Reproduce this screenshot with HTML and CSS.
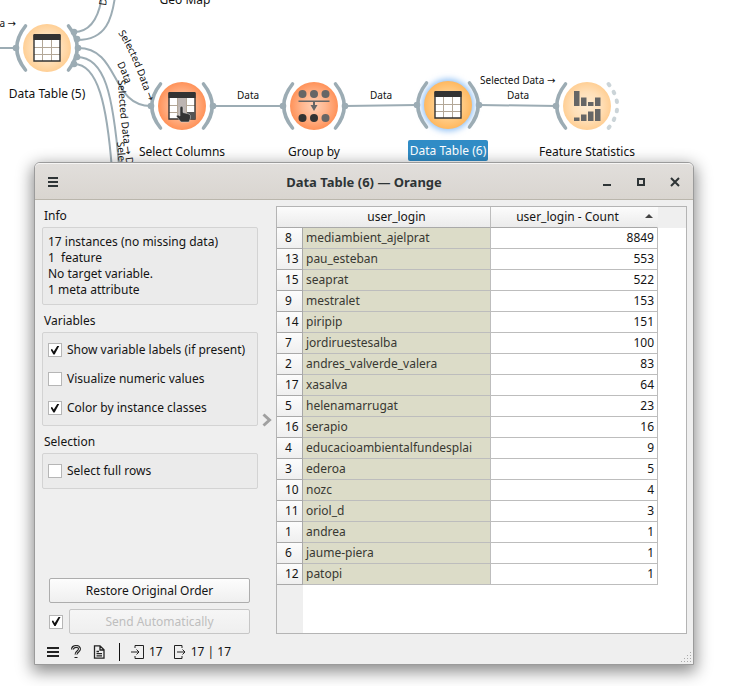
FILE: index.html
```html
<!DOCTYPE html>
<html lang="en">
<head>
<meta charset="utf-8">
<title>Data Table (6) — Orange</title>
<link rel="stylesheet" href="styles.css">
</head>
<body>
<main class="desktop">
  <svg class="canvas" width="738" height="200" viewBox="0 0 738 200" role="img" aria-label="Workflow canvas">
    <defs>
      <radialGradient id="pale"><stop offset="0" stop-color="#ffecd2"/><stop offset=".6" stop-color="#ffdfb7"/><stop offset="1" stop-color="#ffcf95"/></radialGradient>
      <radialGradient id="red"><stop offset="0" stop-color="#ffd0b5"/><stop offset=".5" stop-color="#ffb68e"/><stop offset="1" stop-color="#ff9259"/></radialGradient>
      <radialGradient id="amber"><stop offset="0" stop-color="#ffe1b5"/><stop offset=".6" stop-color="#ffcb85"/><stop offset="1" stop-color="#ffb85f"/></radialGradient>
      <filter id="glow" x="-40%" y="-40%" width="180%" height="180%"><feGaussianBlur stdDeviation="3"/></filter>
      <g id="table">
        <rect x="-13" y="-13" width="26" height="26" fill="#fff"/>
        <path d="M-4.500-8V13M4.500-8V13M-13-.500H13M-13 6.500H13" stroke="#b3a797" fill="none"/>
        <path d="M-13.500-14H13.500V-8H-13.500Z" fill="#333"/>
        <path d="M-13-13V13H13V-13" fill="none" stroke="#333" stroke-width="1.400"/>
      </g>
      <g id="left-anchor"><path d="M-21.500-22Q-39 0-21.500 22" fill="none" stroke="#9cacb4" stroke-width="3.600" stroke-linecap="round"/></g>
      <g id="right-anchor"><path d="M21.500-22Q39 0 21.500 22" fill="none" stroke="#9cacb4" stroke-width="3.600" stroke-linecap="round"/></g>
      <path id="curve-a" d="M118 33C130 50 138 74 150 106"/>
      <path id="curve-b" d="M117 64Q123 75 129 94"/>
      <path id="curve-c" d="M118 80C119 105 122 132 128 175"/>
    </defs>

    <g class="links">
      <path d="M0 48H16M212 106H283M345 106L417 105M479 105L557 106"/>
      <path d="M74 32C94 32 101 10 103-12M77 40C106 40 113 20 116-12"/>
      <path d="M78 48C120 48 110 106 151 106M77 57C105 57 113 95 119 165M74 64C98 64 107 105 112 170"/>
    </g>
    <g class="dots">
      <circle cx="16" cy="48" r="3.300"/><circle cx="74" cy="32" r="3.300"/><circle cx="77" cy="39" r="3.300"/><circle cx="78" cy="48" r="3.300"/><circle cx="77" cy="57" r="3.300"/><circle cx="74" cy="64" r="3.300"/>
      <circle cx="151" cy="106" r="3.300"/><circle cx="213" cy="106" r="3.300"/><circle cx="283" cy="106" r="3.300"/><circle cx="345" cy="106" r="3.300"/><circle cx="417" cy="105" r="3.300"/><circle cx="479" cy="105" r="3.300"/><circle cx="556" cy="106" r="3.300"/>
    </g>

    <g transform="translate(47 48)"><circle r="24" fill="url(#pale)"/><use href="#left-anchor"/><use href="#right-anchor"/><use href="#table"/></g>

    <g transform="translate(182 106)">
      <circle r="24" fill="url(#red)"/><use href="#left-anchor"/><use href="#right-anchor"/><use href="#table"/>
      <path d="M-4-8H4V13H-4Z" fill="#bdb5b2"/><path d="M5 6H13V13H5Z" fill="#555"/>
      <path d="M-2 1Q-.500-.500 1 1V6.500L7 8Q9 9 8.500 12L7 16H-1L-5.500 10.500Q-5 8-2 10Z" fill="#333" stroke="#ddd" stroke-width=".5"/>
    </g>

    <g transform="translate(314 106)">
      <circle r="24" fill="url(#red)"/><use href="#left-anchor"/><use href="#right-anchor"/>
      <g fill="#666"><circle cx="-11.500" cy="-12" r="4"/><circle cy="-12" r="4"/><circle cx="11.500" cy="-12" r="4"/><circle cx="11.500" cy="12" r="4"/><path d="M-15.500-5.500H15.500V-4H-15.500ZM-1-4H1V-1H3.500L0 5-3.500-1H-1Z"/></g>
      <g fill="#333"><circle cx="-11.500" cy="12" r="4"/><circle cy="12" r="4"/></g>
    </g>

    <g transform="translate(448 105)">
      <circle r="26" fill="#8fc0f5" filter="url(#glow)"/><circle r="24" fill="url(#amber)"/><use href="#left-anchor"/><use href="#right-anchor"/><use href="#table"/>
    </g>

    <g transform="translate(587 106)">
      <circle r="24" fill="url(#pale)"/><use href="#left-anchor"/>
      <path d="M21.500-22Q39 0 21.500 22" fill="none" stroke="#cbd4d8" stroke-width="4" stroke-linecap="round" stroke-dasharray="1.500 7.800"/>
      <path d="M-13-15H-7.500V0H-13ZM-6-8.500H-.500V0H-6ZM1-4H6.500V0H1ZM8-8.500H13.500V0H8ZM-13 11.500H-7.500V15H-13ZM-6 8.500H-.500V15H-6ZM1 5.500H6.500V15H1ZM8 3H13.500V15H8Z" fill="#666"/>
    </g>

    <rect x="408" y="140" width="80" height="21" rx="2" fill="#308cc6"/>
    <g class="node-text">
      <text x="185" y="4">Geo Map</text>
      <text x="47" y="98">Data Table (5)</text>
      <text x="182" y="156">Select Columns</text>
      <text x="314" y="156">Group by</text>
      <text class="selected" x="448" y="155">Data Table (6)</text>
      <text x="587" y="156">Feature Statistics</text>
    </g>
    <g class="link-text">
      <text x="16" y="27" text-anchor="end">Data <tspan class="arrow">→</tspan></text>
      <text x="237" y="99">Data</text>
      <text x="370" y="99">Data</text>
      <text x="480" y="84">Selected Data <tspan class="arrow">→</tspan></text>
      <text x="507" y="99">Data</text>
      <text transform="translate(106 6) rotate(-82)">Data</text>
      <text><textPath href="#curve-a">Selected Data <tspan class="arrow">→</tspan></textPath></text>
      <text><textPath href="#curve-b">Data</textPath></text>
      <text><textPath href="#curve-c">Selected Data <tspan class="arrow">→</tspan> Data</textPath></text>
      <text transform="translate(117 142) rotate(86)">Selected Data</text>
    </g>
  </svg>

  <section class="window" aria-label="Data Table (6)">
    <header class="titlebar">
      <button class="title-button" aria-label="Menu"><svg width="12" height="12" viewBox="0 0 12 12"><path d="M1 2H11M1 6H11M1 10H11"/></svg></button>
      <h1>Data Table (6) — Orange</h1>
      <div class="window-controls">
        <button class="title-button" aria-label="Minimize"><svg width="12" height="12" viewBox="0 0 12 12"><path d="M2 9H10"/></svg></button>
        <button class="title-button" aria-label="Maximize"><svg width="12" height="12" viewBox="0 0 12 12"><path d="M3 3H9V9H3Z"/></svg></button>
        <button class="title-button" aria-label="Close"><svg width="12" height="12" viewBox="0 0 12 12"><path d="M2 2L10 10M10 2L2 10"/></svg></button>
      </div>
    </header>

    <div class="content">
      <aside class="sidebar">
        <h2>Info</h2>
        <div class="group info"><p>17 instances (no missing data)</p><p>1&nbsp; feature</p><p>No target variable.</p><p>1 meta attribute</p></div>
        <h2>Variables</h2>
        <div class="group options">
          <label><input type="checkbox" checked>Show variable labels (if present)</label>
          <label><input type="checkbox">Visualize numeric values</label>
          <label><input type="checkbox" checked>Color by instance classes</label>
        </div>
        <h2>Selection</h2>
        <div class="group options"><label><input type="checkbox">Select full rows</label></div>
        <div class="actions">
          <button class="push">Restore Original Order</button>
          <div class="auto"><input type="checkbox" aria-label="Send automatically" checked><button class="push" disabled>Send Automatically</button></div>
        </div>
      </aside>
      <button class="splitter" aria-label="Collapse panel"><svg width="10" height="14" viewBox="0 0 10 14"><path d="M1.500 1.500L7.500 7 1.500 12.500"/></svg></button>
      <div class="view">
        <table>
          <colgroup><col class="col-index"><col class="col-login"><col class="col-count"></colgroup>
          <thead><tr><td></td><th scope="col">user_login</th><th scope="col" class="sorted">user_login - Count<svg width="8" height="4" viewBox="0 0 8 4"><path d="M0 4L4 0 8 4Z"/></svg></th></tr></thead>
          <tbody>
            <tr><th scope="row">8</th><td>mediambient_ajelprat</td><td>8849</td></tr>
            <tr><th scope="row">13</th><td>pau_esteban</td><td>553</td></tr>
            <tr><th scope="row">15</th><td>seaprat</td><td>522</td></tr>
            <tr><th scope="row">9</th><td>mestralet</td><td>153</td></tr>
            <tr><th scope="row">14</th><td>piripip</td><td>151</td></tr>
            <tr><th scope="row">7</th><td>jordiruestesalba</td><td>100</td></tr>
            <tr><th scope="row">2</th><td>andres_valverde_valera</td><td>83</td></tr>
            <tr><th scope="row">17</th><td>xasalva</td><td>64</td></tr>
            <tr><th scope="row">5</th><td>helenamarrugat</td><td>23</td></tr>
            <tr><th scope="row">16</th><td>serapio</td><td>16</td></tr>
            <tr><th scope="row">4</th><td>educacioambientalfundesplai</td><td>9</td></tr>
            <tr><th scope="row">3</th><td>ederoa</td><td>5</td></tr>
            <tr><th scope="row">10</th><td>nozc</td><td>4</td></tr>
            <tr><th scope="row">11</th><td>oriol_d</td><td>3</td></tr>
            <tr><th scope="row">1</th><td>andrea</td><td>1</td></tr>
            <tr><th scope="row">6</th><td>jaume-piera</td><td>1</td></tr>
            <tr><th scope="row">12</th><td>patopi</td><td>1</td></tr>
          </tbody>
        </table>
      </div>
    </div>

    <footer class="statusbar">
      <button aria-label="Menu"><svg width="14" height="14" viewBox="0 0 14 14"><path class="thick" d="M1 3H13M1 7H13M1 11H13"/></svg></button>
      <button aria-label="Help"><svg width="14" height="14" viewBox="0 0 14 14"><path class="help-outer" d="M3.500 4.500C3.500 .500 10.500 .500 10.500 4 10.500 6.500 7 6.500 7 9.500M7 12V13"/><path class="help-inner" d="M3.500 4.500C3.500 .500 10.500 .500 10.500 4 10.500 6.500 7 6.500 7 9.500"/></svg></button>
      <button aria-label="Report"><svg width="14" height="14" viewBox="0 0 14 14"><path class="report" d="M2.500 .800H8L12 4.800V13.200H2.500ZM8 1V5H12M4.500 6.500H7M4.500 8.700H10M4.500 10.900H10"/></svg></button>
      <span class="divider"></span>
      <span class="flow"><svg width="14" height="14" viewBox="0 0 14 14"><path d="M4 3V.500H12.500V13.500H4V11M0 7H8M5.500 4.500L8 7 5.500 9.500"/></svg>17</span>
      <span class="flow"><svg width="14" height="14" viewBox="0 0 14 14"><path d="M9 3V.500H1.500V13.500H9V11M4 7H12M9.500 4.500L12 7 9.500 9.500"/></svg>17 | 17</span>
      <svg class="grip" width="12" height="12" viewBox="0 0 12 12"><path d="M10 1h1v1h-1zM7 4h1v1h-1zM10 4h1v1h-1zM4 7h1v1h-1zM7 7h1v1h-1zM10 7h1v1h-1zM1 10h1v1h-1zM4 10h1v1h-1zM7 10h1v1h-1zM10 10h1v1h-1z"/></svg>
    </footer>
  </section>
</main>
</body>
</html>
```
FILE: styles.css
```css
* { box-sizing: border-box; }
body { margin: 0; background: #fff; color: #141414; font: 12px/16px "Noto Sans", "Liberation Sans", sans-serif; }
button { font: inherit; color: inherit; padding: 0; border: 0; background: none; }
h1, h2, p { margin: 0; }
svg { display: block; flex: none; }

.desktop { position: relative; min-height: 100vh; overflow: hidden; }
.canvas { position: absolute; top: 0; left: 0; }
.links path { fill: none; stroke: #9cacb4; stroke-width: 2; }
.dots circle { fill: #9cacb4; }
.node-text { font-size: 12px; text-anchor: middle; fill: #111; }
.node-text .selected { fill: #fff; }
.link-text { font-size: 10px; fill: #111; }
.arrow { font-family: "DejaVu Sans", sans-serif; }

.window {
  position: absolute; top: 162px; right: 44px; bottom: 21px; left: 34px;
  display: flex; flex-direction: column;
  border: 1px solid #9b9b9b; border-radius: 6px 6px 0 0; background: #efefef;
  box-shadow: 0 5px 16px 2px rgba(0, 0, 0, .45);
}
.titlebar {
  display: grid; grid-template-columns: 1fr auto 1fr; align-items: center;
  height: 37px; padding: 0 12px; border-top: 1px solid #f6f5f4; border-bottom: 1px solid #bab6ac;
  border-radius: 5px 5px 0 0; background: linear-gradient(#e1dedb, #d9d5d0);
}
.titlebar h1 { font-size: 13px; line-height: 18px; font-weight: 700; color: #2e3436; }
.title-button svg { fill: none; stroke: #2e3436; stroke-width: 2; }
.window-controls { display: flex; gap: 22px; justify-self: end; }

.content { display: flex; flex: 1; min-height: 0; }
.sidebar { display: flex; flex-direction: column; width: 223px; padding-left: 7px; }
.sidebar h2 { height: 27px; padding: 8px 2px 0; font-size: 12px; font-weight: 400; }
.group { border: 1px solid #d3d3d3; border-radius: 2px; background: #ebebeb; }
.info { padding: 6px 5px; }
.options { display: flex; flex-direction: column; gap: 15px; padding: 10px 5px; }
.options label { display: flex; align-items: center; gap: 5px; height: 14px; white-space: nowrap; }
input[type="checkbox"] {
  appearance: none; flex: none; display: grid; place-items: center;
  width: 14px; height: 14px; margin: 0; border: 1px solid #b6b6b6; background: #fff;
}
input[type="checkbox"]:checked::before {
  content: ""; width: 9px; height: 9px; background: #111;
  clip-path: polygon(0 45%, 18% 38%, 36% 66%, 78% 0, 100% 0, 46% 100%, 32% 100%);
}
.actions { display: flex; flex-direction: column; gap: 6px; margin-top: auto; padding: 0 8px 0 7px; }
.auto { display: flex; align-items: center; gap: 6px; }
.push { height: 25px; border: 1px solid #adadad; border-radius: 2px; background: linear-gradient(#fdfdfd, #efefef); }
.push:disabled { flex: 1; color: #bebebe; border-color: #c6c6c6; background: linear-gradient(#f6f6f6, #efefef); }
.splitter { width: 18px; display: grid; place-items: center; padding-top: 6px; }
.splitter path { fill: none; stroke: #a0a0a0; stroke-width: 3; }

.view {
  flex: 1; min-width: 0; margin: 6px 6px 0 0; overflow: hidden; border: 1px solid #b4b4b4;
  background: linear-gradient(#efefef, #efefef) 0 0 / 100% 21px no-repeat, linear-gradient(#efefef, #efefef) 0 0 / 26px 100% no-repeat, #fff;
}
table { width: 381px; table-layout: fixed; border-collapse: separate; border-spacing: 0; }
.col-index { width: 26px; }
.col-login { width: 188px; }
.col-count { width: 167px; }
th, td { height: 21px; padding: 0 4px; border: 0 solid #bdbdbd; border-width: 0 1px 1px 0; line-height: 20px; font-weight: 400; white-space: nowrap; }
thead th, thead td { border-bottom-color: #a9a9a9; background: linear-gradient(#fcfcfc, #ebebeb); }
thead td, thead .sorted { border-right-color: transparent; }
thead td { border-right: 0; }
.sorted { position: relative; padding-right: 17px; }
.sorted svg { position: absolute; top: 7px; right: 4px; fill: #444; }
tbody th { padding: 0 0 0 8px; text-align: left; border-color: #a9a9a9; background: linear-gradient(#fcfcfc, #efefef); }
tbody td { padding-right: 3px; background: #fff; text-align: right; }
tbody td:nth-child(2) { padding-left: 3px; background: #dcdcc8; color: #383832; text-align: left; }

.statusbar { display: flex; align-items: center; height: 30px; padding: 6px 0 0 11px; flex: none; }
.statusbar svg { fill: none; stroke: #222; stroke-width: 1; }
.statusbar button { margin-right: 9px; }
.statusbar .thick { stroke-width: 2; }
.statusbar .report { stroke-width: 1.3; }
.statusbar .help-outer { stroke-width: 3; }
.statusbar .help-inner { stroke: #efefef; stroke-width: 1; }
.divider { width: 1px; height: 18px; margin: 0 11px 0 4px; background: #111; }
.flow { display: flex; align-items: center; gap: 4px; margin-right: 10px; }
.statusbar .grip { align-self: flex-end; margin: 0 1px 1px auto; fill: #aaa; stroke: none; }
```
